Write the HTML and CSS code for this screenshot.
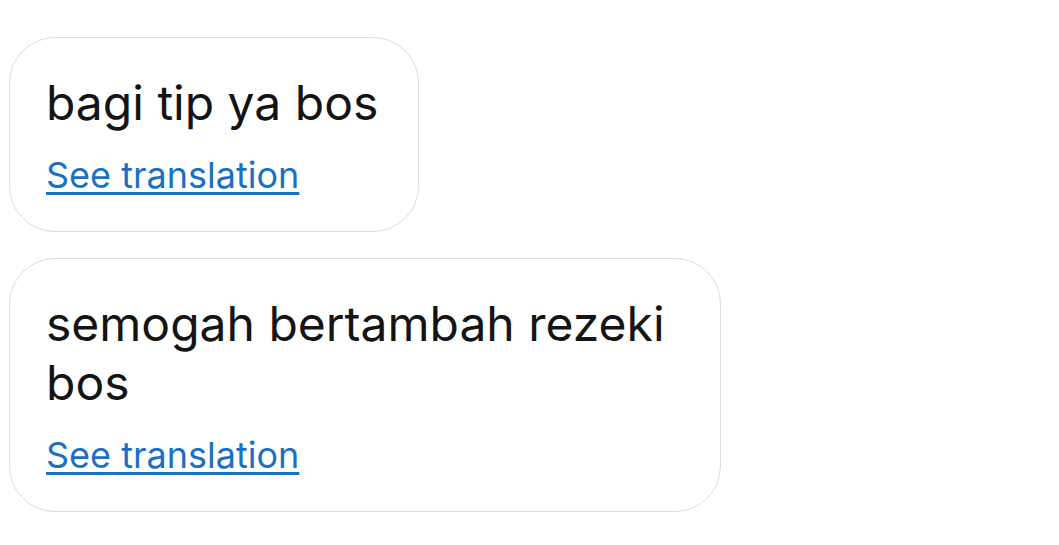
FILE: index.html
```html
<!DOCTYPE html>
<html>
<head>
<meta charset="utf-8">
<link rel="stylesheet" href="styles.css">
</head>
<body>
<div class="thread">
  <div class="bubble">
    <p class="msg">bagi tip ya bos</p>
    <a class="translate" href="#">See translation</a>
  </div>
  <div class="bubble">
    <p class="msg">semogah bertambah rezeki bos</p>
    <a class="translate" href="#">See translation</a>
  </div>
</div>
</body>
</html>
```

FILE: styles.css
```css
html, body {
  margin: 0;
  padding: 0;
  background: #ffffff;
}
body {
  font-family: Inter, "Noto Sans", sans-serif;
  width: 1059px;
  height: 545px;
  overflow: hidden;
}
.thread {
  display: flex;
  flex-direction: column;
  align-items: flex-start;
  gap: 26px;
  padding: 37px 0 0 9px;
}
.bubble {
  box-sizing: border-box;
  max-width: 712px;
  border: 1px solid #dcdcdc;
  border-radius: 46px;
  padding: 35px 40px 34px 36px;
  display: flex;
  flex-direction: column;
  align-items: flex-start;
}
.msg {
  margin: 0;
  font-size: 48px;
  line-height: 59px;
  color: #141414;
}
.translate {
  margin-top: 21px;
  font-size: 36px;
  line-height: 44px;
  color: #1b70c4;
  text-decoration: underline;
  text-decoration-thickness: 3px;
  text-underline-offset: 4px;
}
```
